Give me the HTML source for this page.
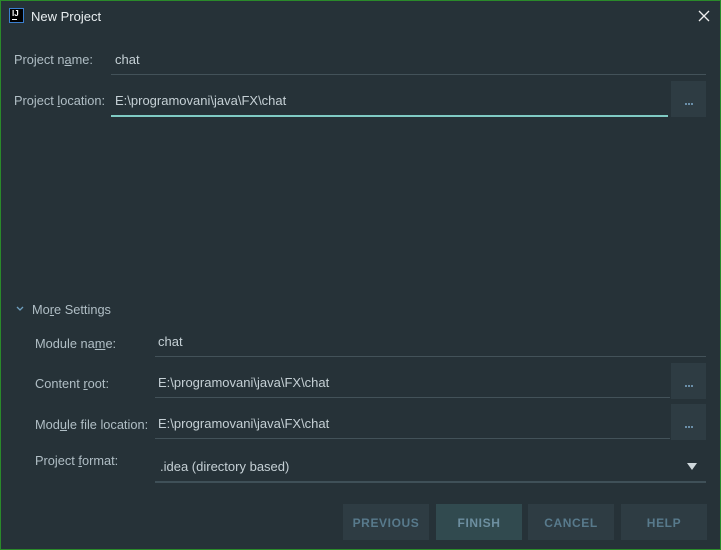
<!DOCTYPE html>
<html><head><style>
body{margin:0;width:721px;height:550px;overflow:hidden;background:#263238;font-family:"Liberation Sans","DejaVu Sans",sans-serif;position:relative}
.b{position:absolute}
.t{position:absolute;font-size:12.8px;color:#b0bec5;white-space:nowrap}
.v{color:#c5d0d5;font-size:13px}
.ln{position:absolute;height:2px;background:#3b4a52}
.br{position:absolute;width:35px;height:36px;background:#2e3c43}
.br::after{content:"";position:absolute;left:14px;top:22px;width:2px;height:2px;background:#6a8ea8;box-shadow:3px 0 #6a8ea8,6px 0 #6a8ea8}
.btn{position:absolute;top:504px;height:36px;width:86px;background:#2e3c43;color:#587a8c;font-weight:bold;font-size:12px;text-align:center;line-height:38px;letter-spacing:0.6px}
u{text-decoration:underline}
</style></head><body>
<div class="b" style="left:0;top:0;width:721px;height:1px;background:#2a8a2a"></div>
<div class="b" style="left:0;top:0;width:1px;height:550px;background:#2a8a2a"></div>
<div class="b" style="left:720px;top:0;width:1px;height:550px;background:#2a8a2a"></div>
<div class="b" style="left:0;top:549px;width:721px;height:1px;background:#2a8a2a"></div>
<div class="b" style="left:9px;top:8px;width:15px;height:15px;background:#000;border:1px solid #3a7fd0;box-sizing:border-box"><div style="color:#fff;font-size:8px;font-weight:bold;position:absolute;left:2px;top:0">IJ</div><div style="position:absolute;left:2px;top:10px;width:5px;height:1px;background:#fff"></div></div>
<div class="t" style="left:31px;top:9px;font-size:13px;color:#e8eef0">New Project</div>
<svg class="b" style="left:698px;top:10px" width="12" height="12"><path d="M1 1L11 11M11 1L1 11" stroke="#eee" stroke-width="1.3"/></svg>

<div class="t" style="left:14px;top:52px">Project n<u>a</u>me:</div>
<div class="t v" style="left:115px;top:52px">chat</div>
<div class="ln" style="left:111px;top:74px;width:595px;height:1px;background:#435259"></div>
<div class="t" style="left:14px;top:93px">Project <u>l</u>ocation:</div>
<div class="t v" style="left:115px;top:93px">E:\programovani\java\FX\chat</div>
<div class="ln" style="left:111px;top:115px;width:557px;background:#80cbc4"></div>
<div class="br" style="left:671px;top:81px"></div>

<svg class="b" style="left:16px;top:306px" width="8" height="6"><path d="M1 1L4 4L7 1" stroke="#6fa0c0" stroke-width="1.3" fill="none"/></svg>
<div class="t" style="left:32px;top:302px">Mo<u>r</u>e Settings</div>

<div class="t" style="left:35px;top:336px">Module na<u>m</u>e:</div>
<div class="t v" style="left:158px;top:334px">chat</div>
<div class="ln" style="left:155px;top:356px;width:551px;height:1px;background:#435259"></div>
<div class="t" style="left:35px;top:376px">Content <u>r</u>oot:</div>
<div class="t v" style="left:158px;top:375px">E:\programovani\java\FX\chat</div>
<div class="ln" style="left:155px;top:397px;width:515px;height:1px;background:#435259"></div>
<div class="br" style="left:671px;top:363px"></div>
<div class="t" style="left:35px;top:417px">Mod<u>u</u>le file location:</div>
<div class="t v" style="left:158px;top:416px">E:\programovani\java\FX\chat</div>
<div class="ln" style="left:155px;top:438px;width:515px;height:1px;background:#435259"></div>
<div class="br" style="left:671px;top:404px"></div>
<div class="t" style="left:35px;top:453px">Project <u>f</u>ormat:</div>
<div class="t v" style="left:160px;top:459px">.idea (directory based)</div>
<svg class="b" style="left:687px;top:463px" width="10" height="7"><path d="M0 0H10L5 7Z" fill="#cfd8dc"/></svg>
<div class="ln" style="left:155px;top:481px;width:551px;background:#3f5058"></div>

<div class="btn" style="left:343px">PREVIOUS</div>
<div class="btn" style="left:436px;background:#314a4f;color:#6d8fa0">FINISH</div>
<div class="btn" style="left:528px">CANCEL</div>
<div class="btn" style="left:621px">HELP</div>
</body></html>
